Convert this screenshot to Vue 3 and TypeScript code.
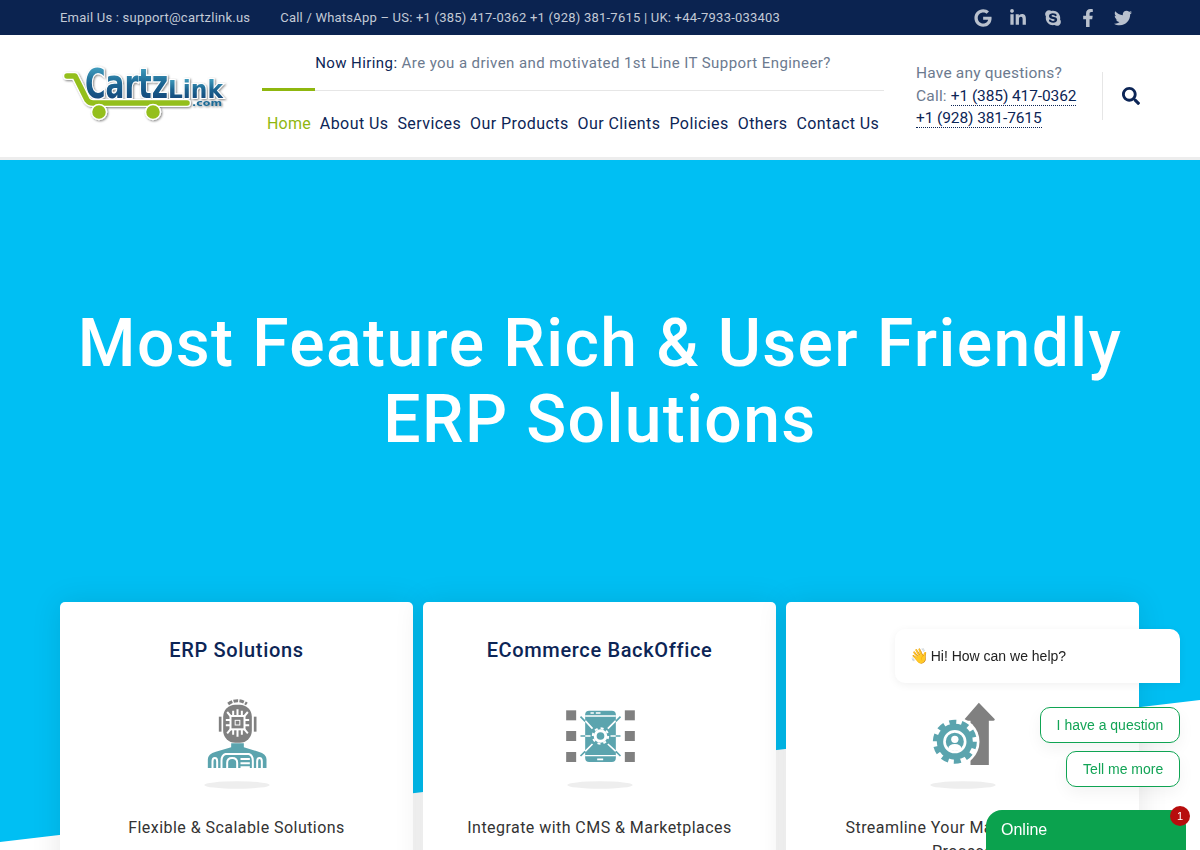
<template>
  <div class="page">
    <div class="topbar">
      <div class="topbar-info">
        <span>Email Us : support@cartzlink.us</span>
        <span>Call / WhatsApp – US: +1 (385) 417-0362 +1 (928) 381-7615 | UK: +44-7933-033403</span>
      </div>
      <div class="socials">
        <svg v-for="icon in socials" :key="icon.name" class="social" :viewBox="icon.box" aria-hidden="true">
          <path :d="icon.d" />
        </svg>
      </div>
    </div>

    <header class="header">
      <div class="logo">
        <svg width="180" height="70" viewBox="0 0 180 70" aria-label="CartzLink.com">
          <defs>
            <linearGradient id="logoBlue" x1="0" y1="0" x2="0" y2="1">
              <stop offset="0" stop-color="#4fb3cf" />
              <stop offset="0.5" stop-color="#1c6491" />
              <stop offset="1" stop-color="#123a70" />
            </linearGradient>
            <filter id="logoShadow" x="-5%" y="-5%" width="110%" height="120%">
              <feDropShadow dx="1" dy="1" stdDeviation="0.8" flood-color="#000" flood-opacity="0.5" />
            </filter>
          </defs>
          <g filter="url(#logoShadow)">
            <path d="M7 15 H15 L27 39 Q29 42 33 42 H127" fill="none" stroke="#fff" stroke-width="8" stroke-linecap="round" stroke-linejoin="round" />
            <path d="M7 15 H15 L27 39 Q29 42 33 42 H127" fill="none" stroke="#94bf1a" stroke-width="5.5" stroke-linecap="round" stroke-linejoin="round" />
            <circle cx="39" cy="51" r="7.5" fill="#94bf1a" stroke="#fff" stroke-width="1.5" />
            <circle cx="93" cy="51" r="7.5" fill="#94bf1a" stroke="#fff" stroke-width="1.5" />
            <text x="25" y="37" textLength="83" lengthAdjust="spacingAndGlyphs" class="logo-big">Cartz</text>
            <text x="108" y="37" textLength="55" lengthAdjust="spacingAndGlyphs" class="logo-small">Link</text>
            <text x="132" y="45" textLength="30" lengthAdjust="spacingAndGlyphs" class="logo-com">.com</text>
          </g>
        </svg>
      </div>

      <div class="header-main">
        <p class="hiring"><b>Now Hiring:</b> Are you a driven and motivated 1st Line IT Support Engineer?</p>
        <nav class="nav">
          <a v-for="(item, i) in navItems" :key="item" :class="{ active: i === 0 }">{{ item }}</a>
        </nav>
      </div>

      <div class="contact">
        <div>Have any questions?</div>
        <div>Call: <a>+1 (385) 417-0362</a></div>
        <div><a>+1 (928) 381-7615</a></div>
      </div>

      <div class="search">
        <svg width="18" height="18" viewBox="0 0 512 512" aria-hidden="true">
          <path d="M505 442.7L405.3 343c-4.5-4.5-10.6-7-17-7H372c27.6-35.3 44-79.7 44-128C416 93.1 322.9 0 208 0S0 93.1 0 208s93.1 208 208 208c48.3 0 92.7-16.4 128-44v16.3c0 6.4 2.5 12.5 7 17l99.7 99.7c9.4 9.4 24.6 9.4 33.9 0l28.3-28.3c9.4-9.4 9.4-24.6.1-34zM208 336c-70.7 0-128-57.2-128-128 0-70.7 57.2-128 128-128 70.7 0 128 57.2 128 128 0 70.7-57.2 128-128 128z" />
        </svg>
      </div>
    </header>

    <section class="hero">
      <h1>Most Feature Rich &amp; User Friendly<br />ERP Solutions</h1>
      <div class="cards">
        <article class="card">
          <h2>ERP Solutions</h2>
          <svg class="card-icon" viewBox="-10.5 0 300 315" aria-hidden="true">
            <ellipse cx="139.5" cy="285" rx="98" ry="11" fill="#eeeeee" />
            <rect x="85" y="80" width="8" height="45" fill="#808080" />
            <rect x="190" y="80" width="8" height="45" fill="#808080" />
            <rect x="98" y="44" width="86" height="114" rx="36" fill="#808080" />
            <path d="M113 42 Q141 22 169 42" fill="none" stroke="#808080" stroke-width="9" stroke-dasharray="14 4" />
            <g stroke="#fff" stroke-width="6" fill="none">
              <rect x="120" y="78" width="42" height="40" />
              <path d="M128 78 V62 M141 78 V58 M154 78 V62 M128 118 V134 M141 118 V140 M154 118 V134 M120 90 H106 M120 106 H106 M162 90 H176 M162 106 H176 M120 78 L110 66 M162 78 L172 66 M120 118 L110 130 M162 118 L172 130" />
            </g>
            <rect x="134" y="91" width="14" height="14" fill="none" stroke="#fff" stroke-width="3" />
            <path d="M52 234 V208 Q52 192 76 185 L122 172 V160 H160 V172 L204 185 Q228 192 228 208 V234 Z" fill="#5ba4ae" />
            <g stroke="#fff" stroke-width="6" fill="none">
              <path d="M66 234 V214 Q66 204 73 204 Q80 204 80 214 V234" />
              <path d="M93 234 V212 Q93 196 105 192 H175 Q187 196 187 212 V234" />
              <path d="M110 234 V218 Q110 204 125 204 Q140 204 140 218 V234" />
              <path d="M150 207 H178 M150 220 H178 M150 232 H178" />
              <path d="M200 234 V214 Q200 204 207 204 Q214 204 214 214 V234" />
            </g>
          </svg>
          <p>Flexible &amp; Scalable Solutions</p>
        </article>

        <article class="card">
          <h2>ECommerce BackOffice</h2>
          <svg class="card-icon" viewBox="-1.5 0 300 315" aria-hidden="true">
            <ellipse cx="148.5" cy="285" rx="98" ry="11" fill="#eeeeee" />
            <g fill="#808080">
              <rect x="47" y="61" width="30" height="30" />
              <rect x="47" y="123" width="30" height="30" />
              <rect x="47" y="186" width="30" height="30" />
              <rect x="223" y="61" width="30" height="30" />
              <rect x="223" y="123" width="30" height="30" />
              <rect x="223" y="186" width="30" height="30" />
            </g>
            <rect x="104" y="62" width="92" height="154" rx="12" fill="#5ba4ae" />
            <path d="M104 78 H196 M104 197 H196" stroke="#fff" stroke-width="4" />
            <path d="M120 69 H130 M136 69 H150 M140 208 H158" stroke="#fff" stroke-width="5" />
            <path d="M104 92 L126 116 M196 92 L172 116 M104 184 L126 162 M196 184 L172 162 M104 138 H120 M180 138 H196" stroke="#fff" stroke-width="5" />
            <path d="M90 80 L104 94 M210 80 L196 94 M90 198 L104 184 M210 198 L196 184 M90 138 H104 M196 138 H210" stroke="#5ba4ae" stroke-width="5" />
            <circle cx="150" cy="138" r="16" fill="none" stroke="#fff" stroke-width="9" />
            <circle cx="150" cy="138" r="23" fill="none" stroke="#fff" stroke-width="6" stroke-dasharray="9 9" />
          </svg>
          <p>Integrate with CMS &amp; Marketplaces</p>
        </article>

        <article class="card">
          <h2>Production</h2>
          <svg class="card-icon" viewBox="-7.5 0 300 315" aria-hidden="true">
            <ellipse cx="142.5" cy="285" rx="98" ry="11" fill="#eeeeee" />
            <path d="M190 38 L238 88 Q238 92 234 92 H220 V225 H165 V92 H150 Q146 92 147 88 Z" fill="#808080" />
            <circle cx="118" cy="155" r="74" fill="#fff" />
            <circle cx="118" cy="155" r="54" fill="#5ba4ae" />
            <circle cx="118" cy="155" r="59" fill="none" stroke="#5ba4ae" stroke-width="14" stroke-dasharray="21 16.1" />
            <circle cx="118" cy="155" r="31" fill="#5ba4ae" stroke="#fff" stroke-width="8" />
            <circle cx="118" cy="148" r="11" fill="#fff" />
            <path d="M98 176 Q100 162 118 162 Q136 162 138 176 Q128 183 118 183 Q108 183 98 176 Z" fill="#fff" />
          </svg>
          <p>Streamline Your Manufacturing Process</p>
        </article>
      </div>
    </section>

    <aside class="chat">
      <div class="chat-bubble"><span class="wave">👋</span> Hi! How can we help?</div>
      <button class="chat-option">I have a question</button>
      <button class="chat-option">Tell me more</button>
      <div class="chat-bar">
        Online
        <span class="chat-badge">1</span>
      </div>
    </aside>
  </div>
</template>

<script setup lang="ts">
const navItems = ['Home', 'About Us', 'Services', 'Our Products', 'Our Clients', 'Policies', 'Others', 'Contact Us']

const socials = [
  {
    name: 'google',
    box: '0 0 488 512',
    d: 'M488 261.8C488 403.3 391.1 504 248 504 110.8 504 0 393.2 0 256S110.8 8 248 8c66.8 0 123 24.5 166.3 64.9l-67.5 64.9C258.5 52.6 94.3 116.6 94.3 256c0 86.5 69.1 156.6 153.7 156.6 98.2 0 135-70.4 140.8-106.9H248v-85.3h236.1c2.3 12.7 3.9 24.9 3.9 41.4z'
  },
  {
    name: 'linkedin',
    box: '0 0 448 512',
    d: 'M100.28 448H7.4V148.9h92.88zM53.79 108.1C24.09 108.1 0 83.5 0 53.8a53.79 53.79 0 0 1 107.58 0c0 29.7-24.1 54.3-53.79 54.3zM447.9 448h-92.68V302.4c0-34.7-.7-79.2-48.29-79.2-48.29 0-55.69 37.7-55.69 76.7V448h-92.78V148.9h89.08v40.8h1.3c12.4-23.5 42.69-48.3 87.88-48.3 94 0 111.28 61.9 111.28 142.3V448z'
  },
  {
    name: 'skype',
    box: '0 0 448 512',
    d: 'M424.7 299.8c2.9-14 4.7-28.9 4.7-43.8 0-113.5-91.9-205.3-205.3-205.3-14.9 0-29.7 1.7-43.8 4.7C161.3 40.7 137.7 32 112 32 50.2 32 0 82.2 0 144c0 25.7 8.7 49.3 23.3 68.2-2.9 14-4.7 28.9-4.7 43.8 0 113.5 91.9 205.3 205.3 205.3 14.9 0 29.7-1.7 43.8-4.7 19 14.6 42.6 23.3 68.2 23.3 61.8 0 112-50.2 112-112 .1-25.6-8.6-49.2-23.2-68.1zm-194.6 91.5c-65.6 0-120.5-29.2-120.5-65 0-16 9-30.6 29.5-30.6 31.2 0 34.1 44.9 88.1 44.9 25.7 0 42.3-11.4 42.3-26.3 0-18.7-16-21.6-42-28-62.5-15.4-117.8-22-117.8-87.2 0-59.2 58.6-81.1 109.1-81.1 55.1 0 110.8 21.9 110.8 55.4 0 16.9-11.4 31.8-30.3 31.8-28.3 0-29.2-33.5-75-33.5-25.7 0-42 7-42 22.5 0 19.8 20.8 21.8 69.1 33 41.4 9.3 90.7 26.8 90.7 78 0 59.6-57.4 86.1-112.5 86.1z'
  },
  {
    name: 'facebook',
    box: '0 0 320 512',
    d: 'M279.14 288l14.22-92.66h-88.91v-60.13c0-25.35 12.42-50.06 52.24-50.06h40.42V6.26S260.43 0 225.36 0c-73.22 0-121.08 44.38-121.08 124.72v70.62H22.89V288h81.39v224h100.17V288z'
  },
  {
    name: 'twitter',
    box: '0 0 512 512',
    d: 'M459.37 151.716c.325 4.548.325 9.097.325 13.645 0 138.72-105.583 298.558-298.558 298.558-59.452 0-114.68-17.219-161.137-47.106 8.447.974 16.568 1.299 25.34 1.299 49.055 0 94.213-16.568 130.274-44.832-46.132-.975-84.792-31.188-98.112-72.772 6.498.974 12.995 1.624 19.818 1.624 9.421 0 18.843-1.3 27.614-3.573-48.081-9.747-84.143-51.98-84.143-102.985v-1.299c13.969 7.797 30.214 12.67 47.431 13.319-28.264-18.843-46.781-51.005-46.781-87.391 0-19.492 5.197-37.36 14.294-52.954 51.655 63.675 129.3 105.258 216.365 109.807-1.624-7.797-2.599-15.918-2.599-24.04 0-57.828 46.782-104.934 104.934-104.934 30.213 0 57.502 12.67 76.67 33.137 23.715-4.548 46.456-13.32 66.599-25.34-7.798 24.366-24.366 44.833-46.132 57.827 21.117-2.273 41.584-8.122 60.426-16.243-14.292 20.791-32.161 39.308-52.628 54.253z'
  }
]
</script>

<style>
html,
body {
  overflow: hidden;
  height: 100%;
}
</style>

<style scoped>
.page {
  height: 850px;
  overflow: hidden;
  font-family: Roboto, "Noto Sans", sans-serif;
  color: #0c2556;
  background: #fff;
}

.topbar {
  height: 35px;
  background: #0b2350;
  color: #c3cad6;
  font-size: 13px;
  display: flex;
  align-items: center;
  justify-content: space-between;
  padding: 0 68px 0 60px;
}

.topbar-info {
  display: flex;
  gap: 30px;
  letter-spacing: 0.22px;
}

.socials {
  display: flex;
  align-items: center;
}

.social {
  width: 18px;
  height: 18px;
  fill: #b9c1ce;
  margin-left: 17px;
}

.header {
  height: 125px;
  box-sizing: border-box;
  border-bottom: 3px solid #ededed;
  display: flex;
  align-items: center;
  padding-left: 60px;
}

.logo {
  width: 202px;
  flex: none;
  display: flex;
}

.header-main {
  width: 622px;
  flex: none;
  margin-right: 32px;
  align-self: flex-start;
}

.hiring {
  margin: 0;
  height: 56px;
  box-sizing: border-box;
  padding-top: 18px;
  line-height: 20px;
  text-align: center;
  font-size: 15px;
  letter-spacing: 0.42px;
  color: #6c7a8f;
  border-bottom: 1px solid #e6e6e6;
  position: relative;
}

.hiring b {
  font-weight: 400;
  color: #0c2556;
}

.hiring::after {
  content: "";
  position: absolute;
  left: 0;
  bottom: -1px;
  width: 53px;
  height: 3px;
  background: #8fb70f;
}

.nav {
  display: flex;
  gap: 9px;
  padding: 23px 0 0 5px;
  font-size: 16px;
  line-height: 20px;
  letter-spacing: 0.42px;
}

.nav .active {
  color: #8fb70f;
  letter-spacing: 0.2px;
}

.contact {
  width: 187px;
  flex: none;
  box-sizing: border-box;
  height: 48px;
  display: flex;
  flex-direction: column;
  justify-content: center;
  border-right: 1px solid #e6e6e6;
  font-size: 15.5px;
  line-height: 22.5px;
  letter-spacing: 0.2px;
  color: #6c7a8f;
}

.contact a {
  color: #0c2556;
  letter-spacing: -0.1px;
  border-bottom: 1px dotted #0c2556;
}

.search {
  margin-left: 19px;
  display: flex;
  fill: #0c2556;
}

.hero {
  position: relative;
  height: 690px;
  box-sizing: border-box;
  background: #00bff3;
  padding-top: 146px;
}

.hero::after {
  content: "";
  position: absolute;
  left: 0;
  right: 0;
  bottom: 0;
  height: 150px;
  background: #fff;
  clip-path: polygon(0 142px, 100% 0, 100% 100%, 0 100%);
}

.hero h1 {
  margin: 0;
  text-align: center;
  color: #fff;
  font-size: 66px;
  line-height: 76px;
  font-weight: 500;
  letter-spacing: 1.4px;
}

.cards {
  position: relative;
  z-index: 1;
  display: grid;
  grid-template-columns: repeat(3, 353px);
  gap: 10px;
  margin: 144px 0 0 60px;
}

.card {
  background: #fff;
  border-radius: 5px;
  height: 330px;
  padding-top: 36px;
  box-sizing: border-box;
  text-align: center;
  box-shadow: 0 0 30px rgba(0, 0, 0, 0.1);
}

.card h2 {
  margin: 0;
  font-size: 20px;
  line-height: 24px;
  font-weight: 500;
  letter-spacing: 0.65px;
  color: #0c2556;
}

.card-icon {
  display: block;
  width: 100px;
  height: 105px;
  margin: 28px auto 0;
}

.card p {
  margin: 21px 30px 0;
  font-size: 16px;
  line-height: 24px;
  letter-spacing: 0.45px;
  color: #333;
}

.chat {
  position: fixed;
  right: 14px;
  bottom: 0;
  width: 300px;
  display: flex;
  flex-direction: column;
  align-items: flex-end;
  font-family: "Liberation Sans", Arial, sans-serif;
  font-size: 14px;
  z-index: 5;
}

.chat-bubble {
  width: 285px;
  height: 54px;
  box-sizing: border-box;
  margin-right: 6px;
  padding-left: 15px;
  display: flex;
  align-items: center;
  gap: 2px;
  background: #fff;
  color: #222;
  border-radius: 10px 10px 0 10px;
  box-shadow: 0 2px 8px rgba(0, 0, 0, 0.06);
}

.wave {
  font-family: "Noto Color Emoji", sans-serif;
  font-size: 15px;
}

.chat-option {
  margin: 24px 6px 0 0;
  height: 36px;
  padding: 0 15.75px;
  background: #fff;
  color: #13a456;
  border: 1px solid #0fa453;
  border-radius: 10px;
  font: inherit;
  box-shadow: 0 6px 16px rgba(0, 0, 0, 0.05);
}

.chat-option + .chat-option {
  margin-top: 8px;
}

.chat-bar {
  position: relative;
  width: 200px;
  height: 40px;
  box-sizing: border-box;
  margin-top: 23px;
  padding: 10px 0 0 15px;
  background: #0ba24e;
  color: #fff;
  font-size: 16px;
  line-height: 19px;
  border-radius: 16px 16px 0 0;
}

.chat-badge {
  position: absolute;
  top: -4px;
  right: -4px;
  width: 20px;
  height: 20px;
  border-radius: 50%;
  background: #b70d0d;
  font-size: 11px;
  line-height: 20px;
  text-align: center;
}

.logo-big {
  font: 700 40px "DejaVu Sans", sans-serif;
  fill: url(#logoBlue);
  stroke: #fff;
  stroke-width: 2.5px;
  paint-order: stroke;
}

.logo-small {
  font: 700 25px "DejaVu Sans", sans-serif;
  fill: url(#logoBlue);
  stroke: #fff;
  stroke-width: 2px;
  paint-order: stroke;
}

.logo-com {
  font: 700 9.5px "DejaVu Sans", sans-serif;
  fill: #1f6a94;
}
</style>
